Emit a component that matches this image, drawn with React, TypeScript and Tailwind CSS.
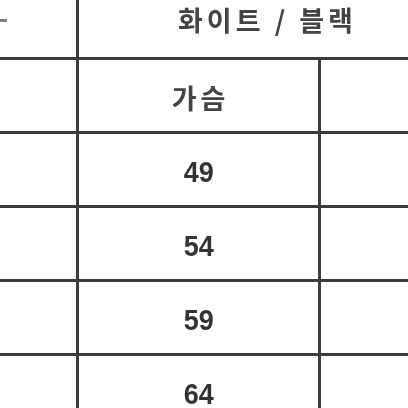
const sizes = ['49', '54', '59', '64'];

export default function App() {
  return (
    <div className="w-[408px] h-[408px] overflow-hidden bg-white">
      <div className="w-[452px] blur-[0.7px] text-[#333]">
        {/* header row */}
        <div className="grid grid-cols-[79px_1fr] h-[60px] border-b-[3px] border-[#3c3c3c]">
          <div className="border-r-[3px] border-[#3c3c3c] flex items-start pt-[19px]">
            <div className="w-[7px] h-[3px] bg-[#808080]" />
          </div>
          <div
            className="flex justify-center pt-[6px] pl-[4px] text-[27px] font-bold leading-none tracking-[4px] text-[#444]"
            style={{ fontFamily: '"Noto Sans CJK KR", "Noto Sans", sans-serif' }}
          >
            화이트 / 블랙
          </div>
        </div>

        {/* label row */}
        <div className="grid grid-cols-[79px_242px_1fr] h-[74px] border-b-[3px] border-[#3c3c3c]">
          <div className="border-r-[3px] border-[#3c3c3c]" />
          <div
            className="border-r-[3px] border-[#3c3c3c] flex items-center justify-center pt-[3px] pl-[4px] text-[27px] font-bold leading-none tracking-[4px] text-[#444]"
            style={{ fontFamily: '"Noto Sans CJK KR", "Noto Sans", sans-serif' }}
          >
            가슴
          </div>
          <div />
        </div>

        {sizes.map((s) => (
          <div key={s} className="grid grid-cols-[79px_242px_1fr] h-[74px] border-b-[3px] border-[#3c3c3c]">
            <div className="border-r-[3px] border-[#3c3c3c]" />
            <div
              className="border-r-[3px] border-[#3c3c3c] flex items-center justify-center pt-[4px] text-[30px] font-bold leading-none"
              style={{ fontFamily: '"Liberation Sans", Arial, sans-serif' }}
            >
              <span className="inline-block scale-x-90">{s}</span>
            </div>
            <div />
          </div>
        ))}
      </div>
    </div>
  );
}
